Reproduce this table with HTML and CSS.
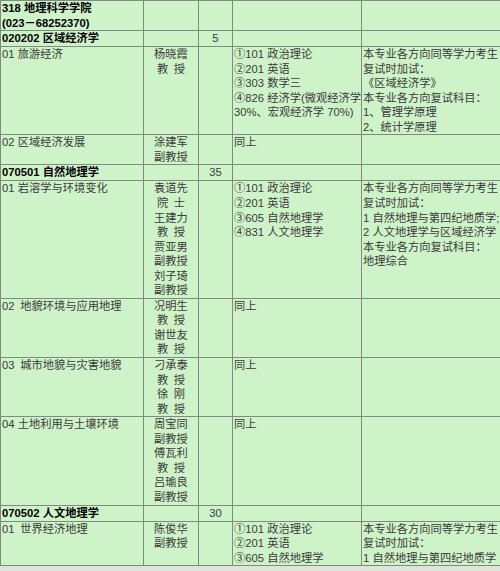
FILE: index.html
```html
<!DOCTYPE html>
<html lang="zh-CN">
<head>
<meta charset="utf-8">
<title>318 地理科学学院</title>
<link rel="stylesheet" href="styles.css">
</head>
<body>
<table class="plan">
  <colgroup>
    <col class="c-dir">
    <col class="c-tutor">
    <col class="c-num">
    <col class="c-exam">
    <col class="c-note">
  </colgroup>
  <tr class="head">
    <td class="strong">318 地理科学学院<br>(023－68252370)</td>
    <td></td>
    <td></td>
    <td></td>
    <td></td>
  </tr>
  <tr class="head major">
    <td class="strong">020202 区域经济学</td>
    <td></td>
    <td class="num">5</td>
    <td></td>
    <td></td>
  </tr>
  <tr>
    <td>01 旅游经济</td>
    <td class="tutor">杨晓霞<br>教&ensp;授</td>
    <td></td>
    <td>①101 政治理论<br>②201 英语<br>③303 数学三<br>④826 经济学(微观经济学<br>30%、宏观经济学 70%)</td>
    <td>本专业各方向同等学力考生<br>复试时加试：<br>《区域经济学》<br>本专业各方向复试科目：<br>1、管理学原理<br>2、统计学原理</td>
  </tr>
  <tr>
    <td>02 区域经济发展</td>
    <td class="tutor">涂建军<br>副教授</td>
    <td></td>
    <td>同上</td>
    <td></td>
  </tr>
  <tr class="major">
    <td class="strong">070501 自然地理学</td>
    <td></td>
    <td class="num">35</td>
    <td></td>
    <td></td>
  </tr>
  <tr>
    <td>01 岩溶学与环境变化</td>
    <td class="tutor">袁道先<br>院&ensp;士<br>王建力<br>教&ensp;授<br>贾亚男<br>副教授<br>刘子琦<br>副教授</td>
    <td></td>
    <td>①101 政治理论<br>②201 英语<br>③605 自然地理学<br>④831 人文地理学</td>
    <td>本专业各方向同等学力考生<br>复试时加试：<br>1 自然地理与第四纪地质学;<br>2 人文地理学与区域经济学<br>本专业各方向复试科目：<br>地理综合</td>
  </tr>
  <tr>
    <td>02&ensp;地貌环境与应用地理</td>
    <td class="tutor">况明生<br>教&ensp;授<br>谢世友<br>教&ensp;授</td>
    <td></td>
    <td>同上</td>
    <td></td>
  </tr>
  <tr>
    <td>03&ensp;城市地貌与灾害地貌</td>
    <td class="tutor">刁承泰<br>教&ensp;授<br>徐&ensp;刚<br>教&ensp;授</td>
    <td></td>
    <td>同上</td>
    <td></td>
  </tr>
  <tr>
    <td>04 土地利用与土壤环境</td>
    <td class="tutor">周宝同<br>副教授<br>傅瓦利<br>教&ensp;授<br>吕瑜良<br>副教授</td>
    <td></td>
    <td>同上</td>
    <td></td>
  </tr>
  <tr class="major">
    <td class="strong">070502 人文地理学</td>
    <td></td>
    <td class="num">30</td>
    <td></td>
    <td></td>
  </tr>
  <tr>
    <td>01&ensp;世界经济地理</td>
    <td class="tutor">陈俊华<br>副教授</td>
    <td></td>
    <td>①101 政治理论<br>②201 英语<br>③605 自然地理学</td>
    <td>本专业各方向同等学力考生<br>复试时加试：<br>1 自然地理与第四纪地质学</td>
  </tr>
</table>
</body>
</html>
```

FILE: styles.css
```css
html, body {
  margin: 0;
  padding: 0;
}

body {
  width: 500px;
  height: 571px;
  overflow: hidden;
  background: #dbe6d8;
}

.plan {
  width: 500px;
  table-layout: fixed;
  border-collapse: collapse;
  background: #cff3c9;
  font-family: "Liberation Sans", "Noto Sans CJK SC", sans-serif;
  font-size: 11.25px;
  line-height: 14.55px;
  color: #3a3a3a;
}

.c-dir { width: 143px; }
.c-tutor { width: 55px; }
.c-num { width: 34px; }
.c-exam { width: 129px; }
.c-note { width: 139px; }

.plan td {
  border: 1px solid #7f8b7f;
  padding: 0 0 0 1px;
  vertical-align: top;
  white-space: nowrap;
  overflow: hidden;
}

.plan .major td {
  height: 15px;
}

.plan td.strong {
  font-weight: bold;
  color: #000;
}

.plan td.tutor,
.plan td.num {
  text-align: center;
  padding-left: 0;
}
```
